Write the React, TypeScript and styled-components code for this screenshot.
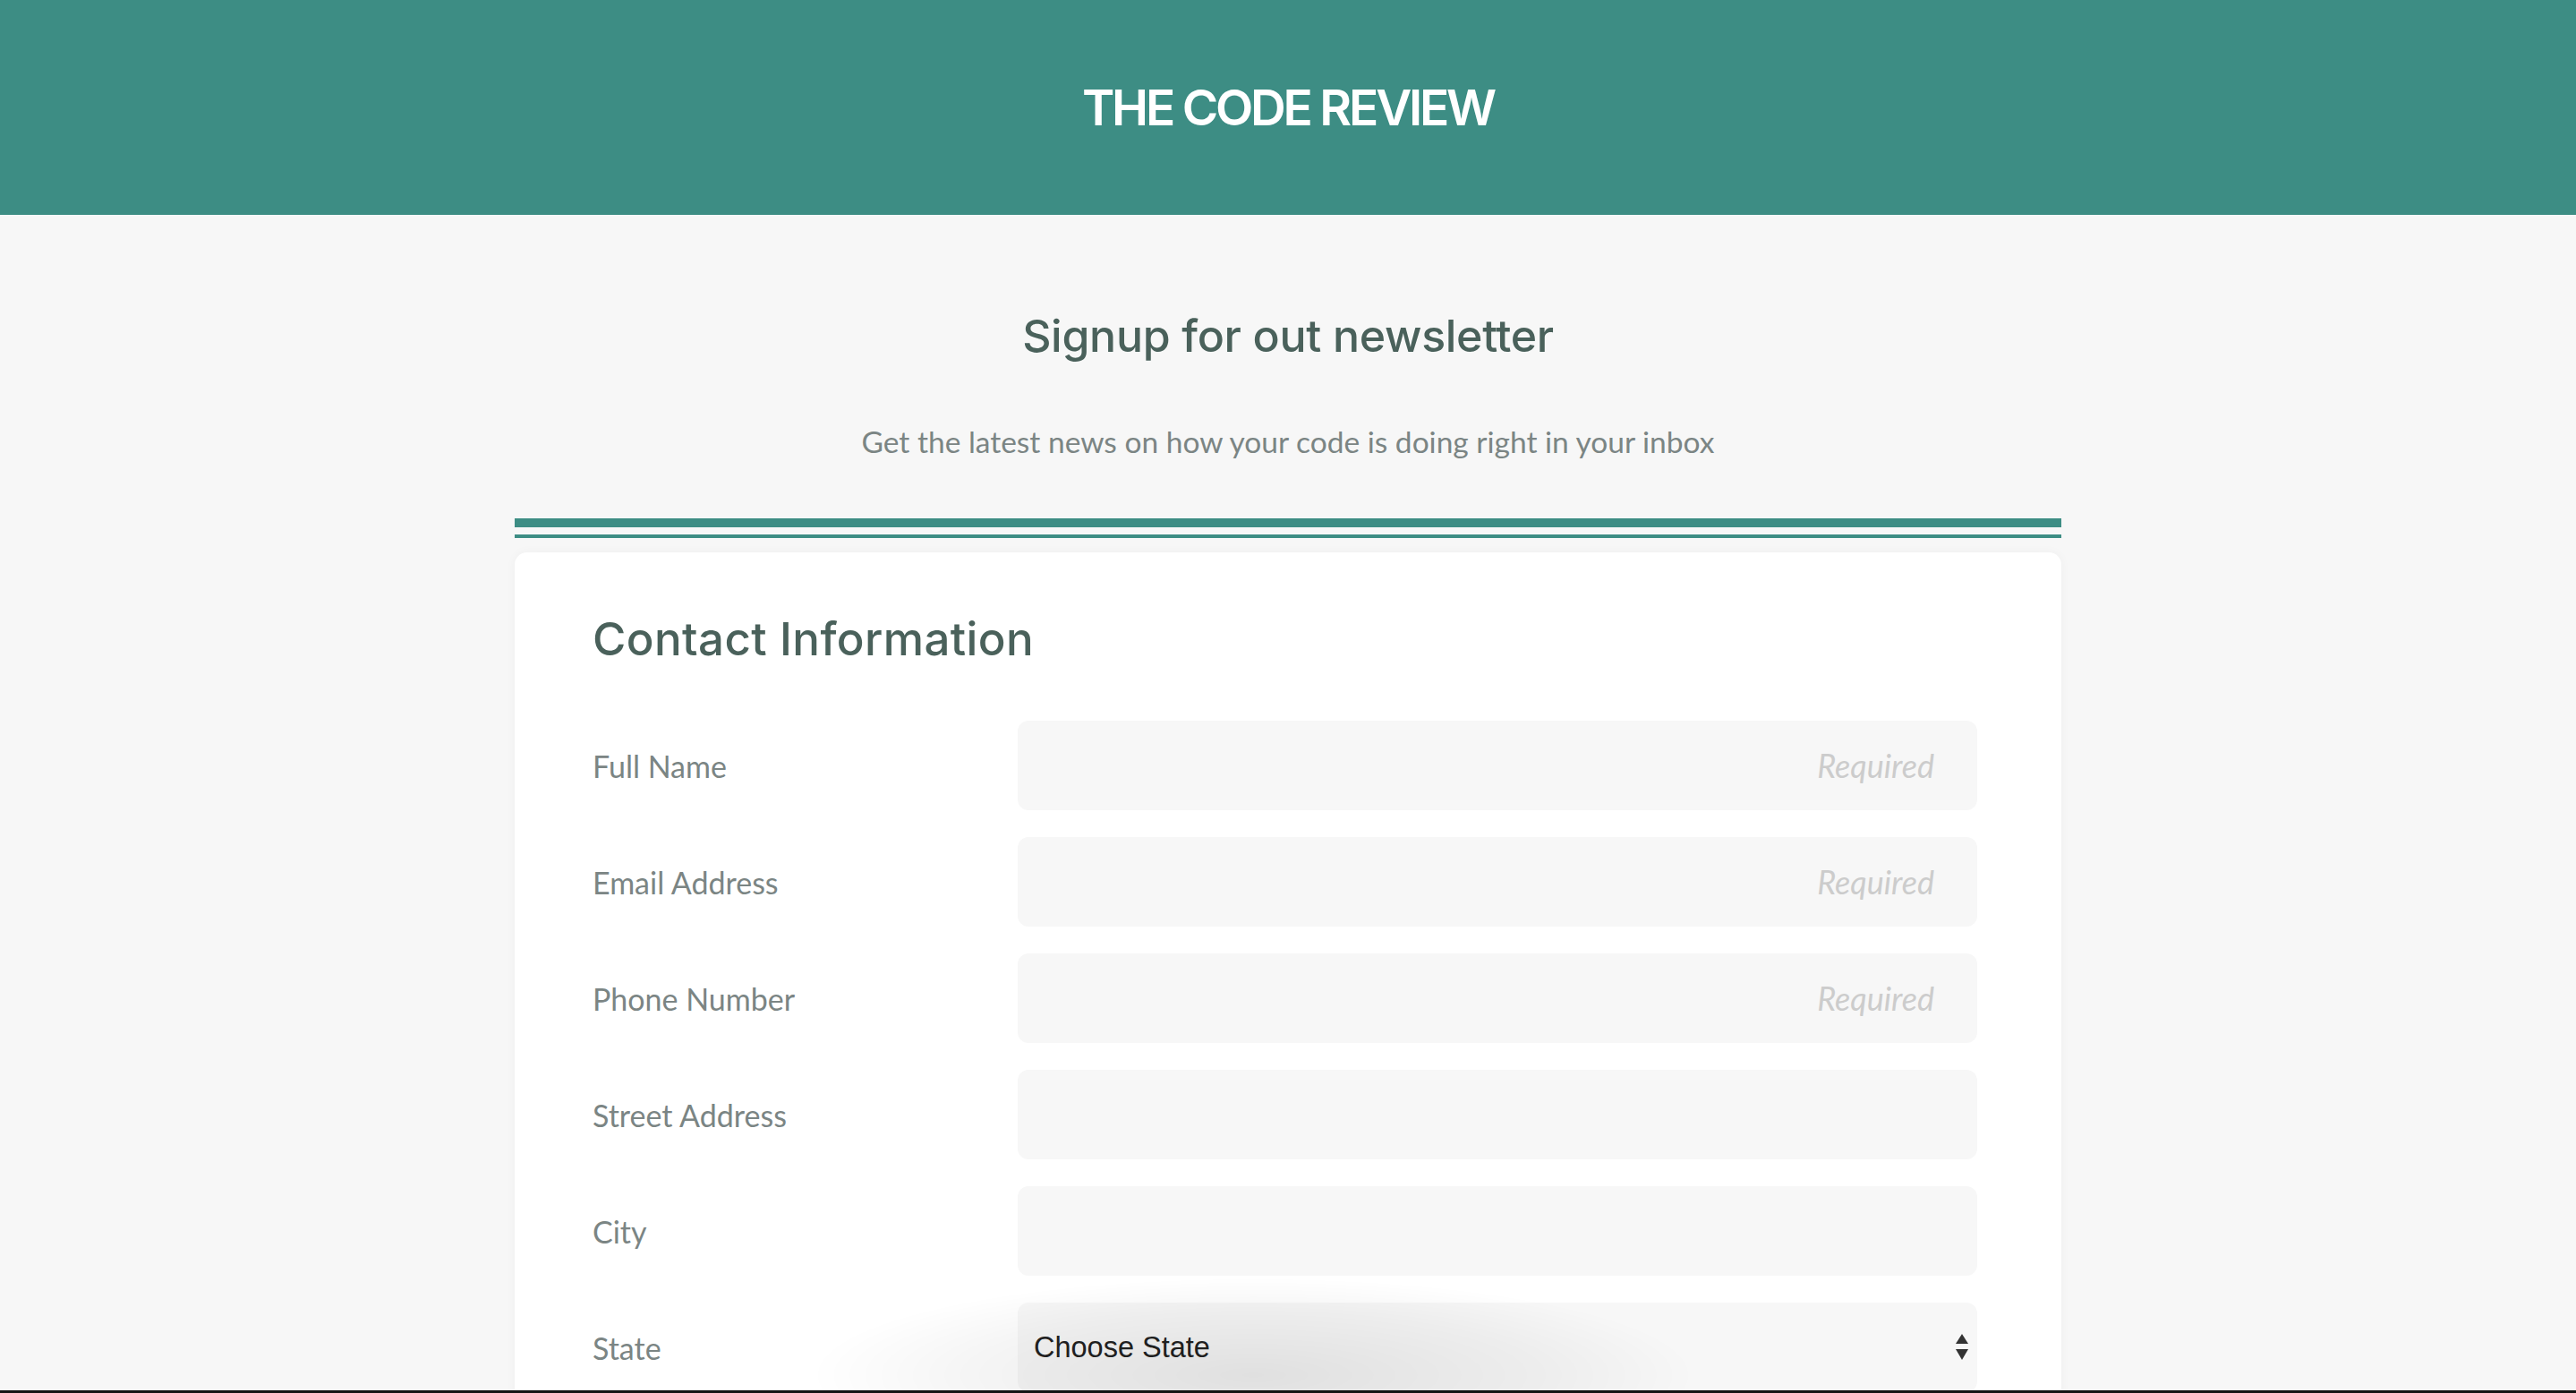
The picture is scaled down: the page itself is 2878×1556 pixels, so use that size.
import React from "react";
import styled, { createGlobalStyle } from "styled-components";

const Global = createGlobalStyle`
  html, body { margin: 0; padding: 0; background: #f7f7f7; }
  * { box-sizing: border-box; }
`;

const Header = styled.header`
  height: 240px;
  background: #3d8d84;
  display: flex;
  align-items: center;
  justify-content: center;
`;

const Brand = styled.h1`
  margin: 0;
  color: #ffffff;
  font-family: Inter, "Noto Sans", sans-serif;
  font-weight: 600;
  font-size: 55px;
  letter-spacing: -3.2px;
`;

const Main = styled.main`
  width: 1728px;
  margin: 0 auto;
  padding-top: 100px;
  display: flex;
  flex-direction: column;
  align-items: center;
`;

const Title = styled.h2`
  margin: 0;
  font-family: Inter, "Noto Sans", sans-serif;
  font-weight: 500;
  font-size: 50px;
  line-height: 70px;
  color: #4a615b;
  letter-spacing: -0.3px;
`;

const Subtitle = styled.p`
  margin: 63px 0 0;
  font-family: Lato, "Noto Sans", sans-serif;
  font-size: 33.5px;
  line-height: 40px;
  color: #7b8584;
`;

const Rules = styled.div`
  align-self: stretch;
  margin-top: 66px;
  display: flex;
  flex-direction: column;
  gap: 8px;
`;

const Rule = styled.div<{ $h: number }>`
  height: ${(p) => p.$h}px;
  background: #3d8d84;
`;

const Card = styled.section`
  align-self: stretch;
  margin-top: 16px;
  background: #ffffff;
  border-radius: 14px 14px 0 0;
  box-shadow: 0 0 12px rgba(0, 0, 0, 0.04);
  padding: 67px 94px 80px 87px;
`;

const CardTitle = styled.h3`
  margin: 0 0 61px;
  font-family: Inter, "Noto Sans", sans-serif;
  font-weight: 500;
  font-size: 51px;
  line-height: 60px;
  color: #4a615b;
  letter-spacing: 0.4px;
`;

const Form = styled.form`
  display: grid;
  grid-template-columns: 475px 1fr;
  row-gap: 30px;
  align-items: center;
`;

const Label = styled.label`
  font-family: Lato, "Noto Sans", sans-serif;
  font-size: 34px;
  color: #7b8584;
`;

const Input = styled.input`
  height: 100px;
  width: 100%;
  border: none;
  outline: none;
  border-radius: 12px;
  background: #f7f7f7;
  padding: 0 48px 0 18px;
  text-align: right;
  font-family: Lato, "Noto Sans", sans-serif;
  font-size: 36px;
  color: #333;
  &::placeholder {
    color: #cccccc;
    font-style: italic;
  }
`;

const SelectWrap = styled.div`
  position: relative;
  height: 100px;
`;

const Select = styled.select`
  appearance: none;
  -webkit-appearance: none;
  width: 100%;
  height: 100%;
  border: none;
  outline: none;
  border-radius: 12px;
  background: #f7f7f7;
  padding: 0 60px 0 18px;
  font-family: "Liberation Sans", Arial, sans-serif;
  font-size: 32.5px;
  color: #222;
`;

const Arrows = styled.svg`
  position: absolute;
  right: 10px;
  top: 35px;
  pointer-events: none;
`;

const Haze = styled.div`
  position: fixed;
  left: 900px;
  bottom: -90px;
  width: 1000px;
  height: 220px;
  border-radius: 50%;
  background: radial-gradient(ellipse at center, rgba(0, 0, 0, 0.09) 0%, rgba(0, 0, 0, 0.04) 45%, rgba(0, 0, 0, 0) 70%);
  pointer-events: none;
`;

const Edge = styled.div`
  position: fixed;
  left: 0;
  right: 0;
  bottom: 0;
  height: 3px;
  background: #141414;
  pointer-events: none;
`;

const fields = [
  { label: "Full Name", required: true },
  { label: "Email Address", required: true },
  { label: "Phone Number", required: true },
  { label: "Street Address", required: false },
  { label: "City", required: false },
];

export default function App() {
  return (
    <>
      <Global />
      <Header>
        <Brand>THE CODE REVIEW</Brand>
      </Header>
      <Main>
        <Title>Signup for out newsletter</Title>
        <Subtitle>Get the latest news on how your code is doing right in your inbox</Subtitle>
        <Rules>
          <Rule $h={10} />
          <Rule $h={4} />
        </Rules>
        <Card>
          <CardTitle>Contact Information</CardTitle>
          <Form>
            {fields.map((f) => (
              <React.Fragment key={f.label}>
                <Label>{f.label}</Label>
                <Input placeholder={f.required ? "Required" : ""} />
              </React.Fragment>
            ))}
            <Label>State</Label>
            <SelectWrap>
              <Select defaultValue="">
                <option value="">Choose State</option>
              </Select>
              <Arrows width="14" height="30" viewBox="0 0 14 30">
                <path d="M7 0 L14 11 L0 11 Z" fill="#333" />
                <path d="M0 17 L14 17 L7 29 Z" fill="#333" />
              </Arrows>
            </SelectWrap>
          </Form>
        </Card>
      </Main>
      <Haze />
      <Edge />
    </>
  );
}
